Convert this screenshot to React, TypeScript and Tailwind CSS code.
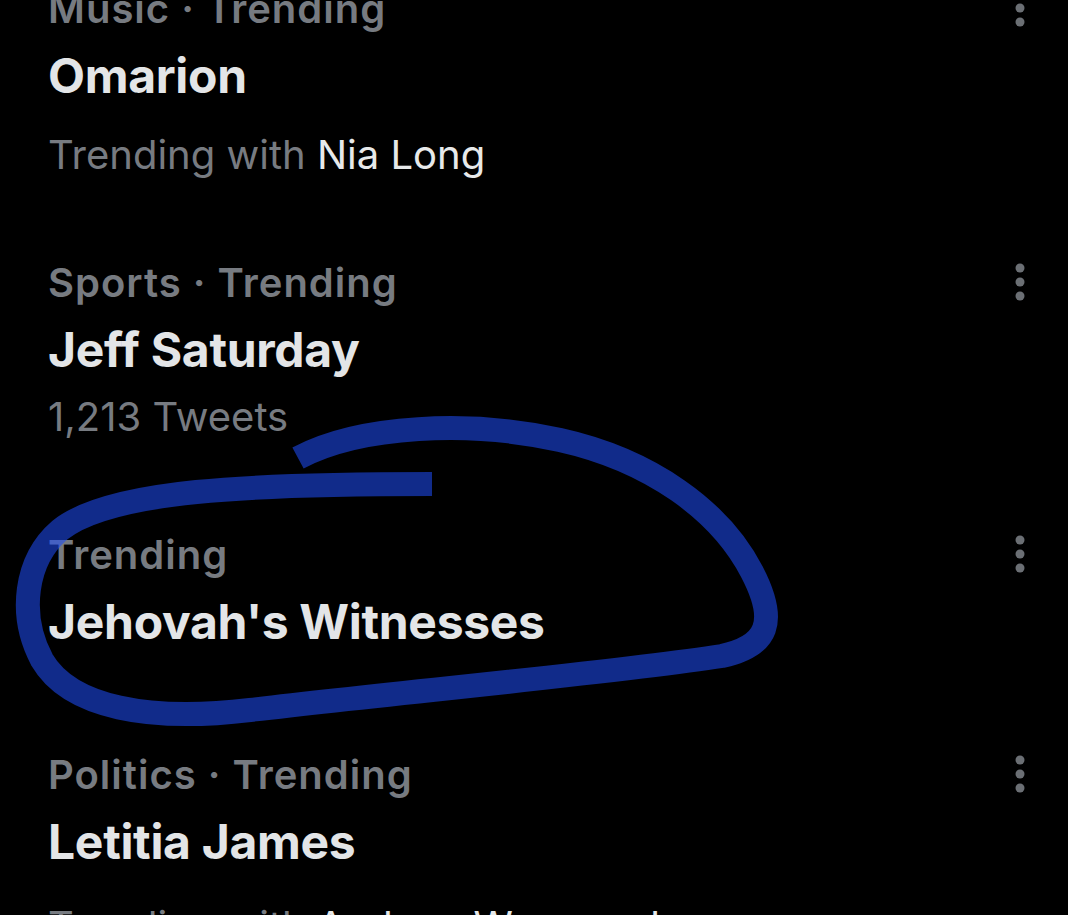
import { Fragment } from 'react';

interface Trend {
  category: string;
  title: string;
  sub?: { lead: string; name?: string };
  subGap?: string;
  rowPad: string;
}

const trends: Trend[] = [
  {
    category: 'Music · Trending',
    title: 'Omarion',
    sub: { lead: 'Trending with ', name: 'Nia Long' },
    subGap: 'mt-[26px]',
    rowPad: 'pb-[80px]',
  },
  {
    category: 'Sports · Trending',
    title: 'Jeff Saturday',
    sub: { lead: '1,213 Tweets' },
    subGap: 'mt-[14px]',
    rowPad: 'pb-[90px]',
  },
  {
    category: 'Trending',
    title: "Jehovah's Witnesses",
    rowPad: 'pb-[100px]',
  },
  {
    category: 'Politics · Trending',
    title: 'Letitia James',
    sub: { lead: 'Trending with ', name: 'Andrew Wommack' },
    subGap: 'mt-[31px]',
    rowPad: 'pb-[40px]',
  },
];

function MoreDots() {
  return (
    <svg width="12" height="40" viewBox="0 0 12 40" className="shrink-0" aria-hidden>
      <circle cx="6" cy="6" r="4.5" fill="#6b6f74" />
      <circle cx="6" cy="20" r="4.5" fill="#6b6f74" />
      <circle cx="6" cy="34" r="4.5" fill="#6b6f74" />
    </svg>
  );
}

function TrendRow({ trend }: { trend: Trend }) {
  return (
    <div className={`flex items-start justify-between pl-[48px] pr-[42px] ${trend.rowPad}`}>
      <div className="flex min-w-0 flex-col">
        <span className="text-[40px] font-semibold leading-[48px] tracking-[1px] text-[#777b81] whitespace-nowrap">
          {trend.category}
        </span>
        <span className="mt-[14px] text-[48px] font-bold leading-[58px] tracking-[-0.3px] text-[#e3e5e7] whitespace-nowrap">
          {trend.title}
        </span>
        {trend.sub && (
          <span className={`${trend.subGap} text-[40px] leading-[48px] text-[#777b81] whitespace-nowrap`}>
            {trend.sub.lead}
            {trend.sub.name && <Fragment><span className="text-[#e7e9ea]">{trend.sub.name}</span></Fragment>}
          </span>
        )}
      </div>
      <div className="pt-[3px]">
        <MoreDots />
      </div>
    </div>
  );
}

export default function App() {
  return (
    <div className="relative h-[915px] w-[1068px] overflow-hidden bg-black font-['Inter',sans-serif]">
      <div className="-mt-[15px] flex flex-col">
        {trends.map((t) => (
          <TrendRow key={t.title} trend={t} />
        ))}
      </div>

      {/* hand-drawn circle over the trend */}
      <svg
        className="pointer-events-none absolute left-0 top-0"
        width="1068"
        height="915"
        viewBox="0 0 1068 915"
        aria-hidden
      >
        <path
          d="M298 458 C 360 425, 470 420, 560 440 C 650 460, 720 510, 752 572 C 778 622, 768 646, 722 656 C 620 672, 420 690, 250 710 C 150 722, 70 708, 42 660 C 18 615, 25 560, 60 530 C 110 490, 250 484, 432 484"
          fill="none"
          stroke="rgb(30,76,246)"
          strokeOpacity="0.56"
          strokeWidth="24"
          strokeLinejoin="round"
        />
      </svg>
    </div>
  );
}
